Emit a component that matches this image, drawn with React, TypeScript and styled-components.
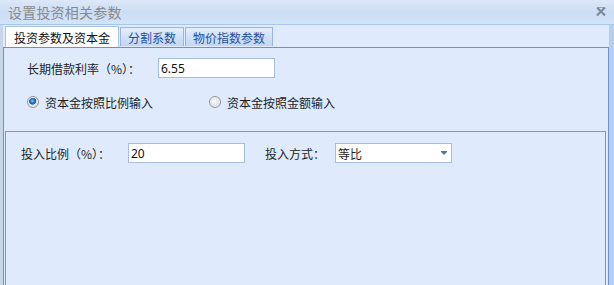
import styled, { createGlobalStyle } from "styled-components";

const Global = createGlobalStyle`
  html, body { margin: 0; padding: 0; }
  body {
    width: 614px;
    height: 285px;
    overflow: hidden;
    background: #dfebfc;
    font-family: "Noto Sans CJK SC", "Liberation Sans", sans-serif;
    font-size: 12px;
    color: #1e1e1e;
  }
`;

const tabs = [
  { label: "投资参数及资本金", active: true },
  { label: "分割系数", active: false },
  { label: "物价指数参数", active: false },
];

const App = () => {
  return (
    <>
      <Global />
      <Window>
        <TitleBar>
          <Title>设置投资相关参数</Title>
          <Close width="10" height="9" viewBox="0 0 10 9">
            <path d="M1 0.5 L9 8.5 M9 0.5 L1 8.5" stroke="#7c8594" strokeWidth="2" />
            <path d="M2 0.5 L8 0.5" stroke="#9aa2ae" strokeWidth="1" />
          </Close>
        </TitleBar>
        <Body>
          <TabStrip>
            {tabs.map((t) => (
              <Tab key={t.label} $active={t.active}>
                {t.label}
              </Tab>
            ))}
          </TabStrip>
          <Panel>
            <Row>
              <Label $w={131}>长期借款利率（%）：</Label>
              <TextBox>6.55</TextBox>
            </Row>
            <RadioRow>
              <RadioItem>
                <Radio $checked />
                <span>资本金按照比例输入</span>
              </RadioItem>
              <RadioItem>
                <Radio />
                <span>资本金按照金额输入</span>
              </RadioItem>
            </RadioRow>
            <Group>
              <GroupRow>
                <Label $w={107}>投入比例（%）：</Label>
                <TextBox>20</TextBox>
                <Label $w={70} $gap={20}>投入方式：</Label>
                <Select>
                  <span>等比</span>
                  <Arrow />
                </Select>
              </GroupRow>
            </Group>
          </Panel>
        </Body>
      </Window>
    </>
  );
};

export default App;

const Window = styled.div`
  width: 614px;
  height: 285px;
  display: flex;
  flex-direction: column;
`;

const TitleBar = styled.div`
  height: 25px;
  flex-shrink: 0;
  box-sizing: border-box;
  display: flex;
  align-items: center;
  justify-content: space-between;
  padding: 0 8px 0 8px;
  background: linear-gradient(to bottom, #dde8f7 0%, #cbddf5 50%, #d3e3f8 100%);
  border-bottom: 1px solid #a6c6ec;
`;

const Title = styled.div`
  font-size: 14px;
  color: #8a8a8a;
  letter-spacing: 0.2px;
`;

const Close = styled.svg`
  display: block;
  margin-top: -2px;
`;

const Body = styled.div`
  flex: 1;
  display: flex;
  flex-direction: column;
  background: #dfebfc;
  border-left: 3px solid #c8d6ea;
  border-right: 5px solid #b7cfee;
`;

const TabStrip = styled.div`
  display: flex;
  align-items: flex-end;
  gap: 1px;
  height: 21px;
  padding-left: 2px;
  margin-top: 1px;
`;

const Tab = styled.div<{ $active?: boolean }>`
  box-sizing: border-box;
  height: ${(p) => (p.$active ? "21px" : "19px")};
  display: flex;
  align-items: center;
  padding: 0 ${(p) => (p.$active ? "8px" : "7px")};
  font-size: 12px;
  color: ${(p) => (p.$active ? "#111" : "#1e4f9c")};
  background: ${(p) =>
    p.$active
      ? "#ffffff"
      : "linear-gradient(to bottom, #e4eefb 0%, #cfe0f6 55%, #c2d7f3 100%)"};
  border: 1px solid ${(p) => (p.$active ? "#a9c3e3" : "#98b6df")};
  border-bottom: none;
  margin-bottom: ${(p) => (p.$active ? "0" : "1px")};
`;

const Panel = styled.div`
  flex: 1;
  display: flex;
  flex-direction: column;
  border: 1px solid #6b92cf;
  border-bottom: none;
  padding: 10px 1px 0 1px;
`;

const Row = styled.div`
  display: flex;
  align-items: center;
  padding-left: 22px;
  height: 20px;
`;

const Label = styled.span<{ $w: number; $gap?: number }>`
  white-space: nowrap;
  flex-shrink: 0;
  width: ${(p) => p.$w}px;
  margin-left: ${(p) => p.$gap ?? 0}px;
`;

const TextBox = styled.div`
  box-sizing: border-box;
  width: 117px;
  height: 20px;
  background: #fff;
  border: 1px solid #a7bdd9;
  padding: 0 0 0 2px;
  display: flex;
  align-items: center;
  font-family: "Noto Sans", "Liberation Sans", sans-serif;
  font-size: 12px;
  color: #111;
`;

const RadioRow = styled.div`
  display: flex;
  align-items: center;
  padding-left: 22px;
  margin-top: 14px;
  height: 20px;
`;

const RadioItem = styled.label`
  display: flex;
  align-items: center;
  gap: 6px;
  width: 182px;
`;

const Radio = styled.span<{ $checked?: boolean }>`
  box-sizing: border-box;
  width: 12px;
  height: 12px;
  border-radius: 50%;
  border: 1px solid #8f96a1;
  box-shadow: inset 0 0 0 1px #f2f4f7;
  background: ${(p) =>
    p.$checked
      ? "radial-gradient(circle at 45% 40%, #8cc6f5 0%, #2a78cf 25%, #15549f 40%, #dfe3e8 48%, #c7ccd4 100%)"
      : "radial-gradient(circle at 45% 40%, #fbfbfc 0%, #e3e6ea 50%, #c3c8cf 100%)"};
`;

const Group = styled.div`
  flex: 1;
  margin-top: 19px;
  margin-right: 1px;
  border: 1px solid #7399d3;
  border-bottom: none;
  padding-top: 11px;
`;

const GroupRow = styled.div`
  display: flex;
  align-items: center;
  padding-left: 15px;
  height: 20px;
`;

const Select = styled.div`
  box-sizing: border-box;
  width: 117px;
  height: 20px;
  background: #fff;
  border: 1px solid #a7bdd9;
  padding: 0 4px 0 2px;
  display: flex;
  align-items: center;
  justify-content: space-between;
`;

const Arrow = styled.span`
  width: 0;
  height: 0;
  border-left: 3px solid transparent;
  border-right: 3px solid transparent;
  border-top: 3px solid #4a78b8;
  box-shadow: 0 -1px 0 #4a78b8;
`;
